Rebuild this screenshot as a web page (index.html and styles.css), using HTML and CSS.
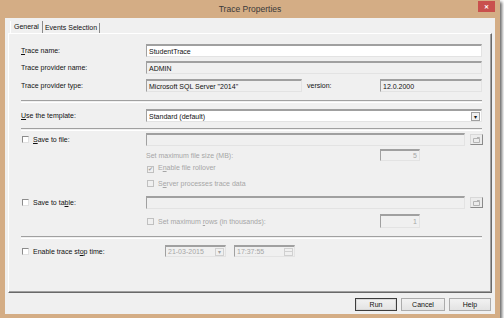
FILE: index.html
```html
<!DOCTYPE html>
<html lang="en">
<head>
    <meta charset="UTF-8">
    <title>Trace Properties</title>
    <link rel="stylesheet" href="styles.css">
</head>
<body>
    <div class="window">
        <div class="titlebar">
            <span class="title">Trace Properties</span>
            <span class="close">&#x2715;</span>
        </div>
        <div class="client">
            <div class="tabs">
                <span class="tab active">General</span>
                <span class="tab">Events Selection</span>
            </div>
            <div class="panel">
                <div class="row r1">
                    <span class="label"><u>T</u>race name:</span>
                    <span class="field white wide">StudentTrace</span>
                </div>
                <div class="row r2">
                    <span class="label">Trace provider name:</span>
                    <span class="field wide">ADMIN</span>
                </div>
                <div class="row r3">
                    <span class="label">Trace provider type:</span>
                    <span class="field type">Microsoft SQL Server "2014"</span>
                    <span class="version">version:</span>
                    <span class="field ver">12.0.2000</span>
                </div>
                <div class="sep s1"></div>
                <div class="row r4">
                    <span class="label"><u>U</u>se the template:</span>
                    <span class="field white wide combo">Standard (default)<span class="arrow">&#9662;</span></span>
                </div>
                <div class="sep s2"></div>
                <div class="row r5">
                    <span class="label"><span class="check"></span><u>S</u>ave to file:</span>
                    <span class="field path"></span>
                    <span class="browse">
                        <svg width="7" height="6" viewBox="0 0 7 6"><path d="M0.5 1.5h6v4h-6z M4 0.5h2.5v1" fill="none" stroke="#b4b4b4"/></svg>
                    </span>
                </div>
                <div class="row r6">
                    <span class="sublabel muted">Set maximum file size (MB):</span>
                    <span class="field num muted">5</span>
                </div>
                <div class="row r7">
                    <span class="option muted"><span class="check checked">&#10004;</span>E<u>n</u>able file rollover</span>
                </div>
                <div class="row r8">
                    <span class="option muted"><span class="check"></span>S<u>e</u>rver processes trace data</span>
                </div>
                <div class="row r9">
                    <span class="label"><span class="check"></span>Save to ta<u>b</u>le:</span>
                    <span class="field path"></span>
                    <span class="browse">
                        <svg width="7" height="6" viewBox="0 0 7 6"><path d="M0.5 1.5h6v4h-6z M4 0.5h2.5v1" fill="none" stroke="#b4b4b4"/></svg>
                    </span>
                </div>
                <div class="row r10">
                    <span class="sublabel muted"><span class="check"></span>Set maximum <u>r</u>ows (in thousands):</span>
                    <span class="field num muted">1</span>
                </div>
                <div class="sep s3"></div>
                <div class="row r11">
                    <span class="label"><span class="check"></span>Enable trace st<u>o</u>p time:</span>
                    <span class="field date muted">21-03-2015<span class="drop">&#9662;</span></span>
                    <span class="field time muted">17:37:55<span class="spin"></span></span>
                </div>
            </div>
            <div class="buttons">
                <span class="btn default">Run</span>
                <span class="btn">Cancel</span>
                <span class="btn">Help</span>
            </div>
        </div>
    </div>
</body>
</html>
```

FILE: styles.css
```css
body {
    margin: 0;
    background: #ffffff;
    font-family: "Liberation Sans", Arial, sans-serif;
    font-size: 7px;
    color: #111111;
}

.window {
    width: 490px;
    height: 314px;
    padding: 0 5px 4px 5px;
    background: #d4ad85;
    box-shadow: 2px 2px 3px rgba(0,0,0,0.6);
    display: flex;
    flex-direction: column;
}

.titlebar {
    height: 18px;
    flex-shrink: 0;
    display: flex;
    align-items: center;
    justify-content: center;
    position: relative;
}

.title {
    font-size: 8.5px;
    color: #3a3a3a;
}

.close {
    position: absolute;
    right: 0;
    top: 1px;
    width: 17px;
    height: 11px;
    background: #c9504d;
    color: #fff;
    font-size: 6px;
    font-weight: bold;
    display: flex;
    align-items: center;
    justify-content: center;
}

.client {
    height: 296px;
    background: #f0f0f0;
    display: flex;
    flex-direction: column;
    padding: 0 3px;
}

.tabs {
    display: flex;
    margin-top: 3px;
    height: 12px;
    padding-left: 2px;
    align-items: flex-end;
    flex-shrink: 0;
}

.tab {
    padding: 0 2px;
    height: 10px;
    line-height: 10px;
    border-right: 1px solid #8a8a8a;
}

.tab.active {
    height: 12px;
    line-height: 11px;
    padding: 0 3px;
    border-left: 1px solid #ffffff;
}

.panel {
    box-sizing: border-box;
    height: 260px;
    flex-shrink: 0;
    border-top: 1px solid #ffffff;
    border-left: 1px solid #ffffff;
    border-right: 1px solid #696969;
    border-bottom: 1px solid #696969;
    box-shadow: inset -1px -1px 0 #a0a0a0;
    padding: 10px 8px 0 12px;
    display: flex;
    flex-direction: column;
}

.row {
    display: flex;
    align-items: center;
    height: 13px;
    flex-shrink: 0;
}

.label {
    width: 125px;
    white-space: nowrap;
}

.field {
    height: 13px;
    box-sizing: border-box;
    border-top: 2px solid #a0a0a0;
    border-left: 1px solid #a0a0a0;
    border-right: 1px solid #e3e3e3;
    border-bottom: 1px solid #e3e3e3;
    background: #f0f0f0;
    padding: 0 2px;
    display: flex;
    align-items: center;
    white-space: nowrap;
}

.field.white {
    background: #ffffff;
}

.wide {
    width: 336px;
}

.type {
    width: 156px;
}

.version {
    margin-left: 5px;
    width: 73px;
}

.ver {
    width: 102px;
}

.combo {
    justify-content: space-between;
    padding-right: 1px;
}

.arrow {
    width: 9px;
    height: 9px;
    border: 1px solid #a0a0a0;
    box-sizing: border-box;
    font-size: 6px;
    display: flex;
    align-items: center;
    justify-content: center;
    background: #f0f0f0;
}

.sep {
    height: 1px;
    width: 461px;
    border-top: 1px solid #a0a0a0;
    border-bottom: 1px solid #ffffff;
    flex-shrink: 0;
}

.check {
    display: inline-block;
    vertical-align: -1px;
    width: 7px;
    height: 7px;
    box-sizing: border-box;
    border: 1px solid #8c8c8c;
    border-right-color: #e0e0e0;
    border-bottom-color: #e0e0e0;
    background: #ffffff;
    margin: 0 4px 0 1px;
    font-size: 6px;
    line-height: 5px;
    text-align: center;
    color: #a0a0a0;
}

.muted {
    color: #a6a6a6;
}

.muted .check {
    background: #f0f0f0;
    border-color: #c0c0c0;
}

.path {
    width: 319px;
}

.browse {
    width: 13px;
    height: 11px;
    margin-left: 5px;
    box-sizing: border-box;
    border: 1px solid #d8d8d8;
    border-right-color: #8a8a8a;
    border-bottom-color: #8a8a8a;
    background: #ececec;
    display: flex;
    align-items: center;
    justify-content: center;
}

.sublabel {
    margin-left: 125px;
    width: 234px;
    white-space: nowrap;
}

.option {
    margin-left: 125px;
    white-space: nowrap;
}

.num {
    width: 40px;
    justify-content: flex-end;
    height: 12px;
}

.r2 { margin-top: 4px; }
.r3 { margin-top: 5px; }
.s1 { margin-top: 8px; }
.r4 { margin-top: 6px; }
.s2 { margin-top: 6px; }
.r5 { margin-top: 2px; }
.r6 { margin-top: 3px; height: 12px; }
.r7 { margin-top: 2px; height: 11px; }
.r8 { margin-top: 4px; height: 11px; }
.r9 { margin-top: 7px; }
.r10 { margin-top: 5px; height: 14px; }
.r10 .num { height: 14px; }
.s3 { margin-top: 8px; }
.r11 { margin-top: 6px; height: 12px; }

.date {
    margin-left: 19px;
    width: 61px;
    height: 12px;
    justify-content: space-between;
    padding-right: 1px;
}

.time {
    margin-left: 8px;
    width: 61px;
    height: 12px;
    justify-content: space-between;
    padding-right: 1px;
}

.drop {
    width: 9px;
    height: 8px;
    font-size: 6px;
    border: 1px solid #d0d0d0;
    box-sizing: border-box;
    display: flex;
    align-items: center;
    justify-content: center;
    color: #a0a0a0;
}

.spin {
    width: 9px;
    height: 8px;
    border: 1px solid #d0d0d0;
    box-sizing: border-box;
    background: linear-gradient(#d0d0d0, #d0d0d0) center / 100% 1px no-repeat;
}

.buttons {
    display: flex;
    justify-content: flex-end;
    gap: 4px;
    margin-top: 5px;
    padding-right: 1px;
}

.btn {
    width: 44px;
    height: 13px;
    box-sizing: border-box;
    border: 1px solid #acacac;
    background: linear-gradient(#f2f2f2, #e3e3e3);
    display: flex;
    align-items: center;
    justify-content: center;
}

.btn.default {
    width: 42px;
    border: 1px solid #3d3d3d;
    box-shadow: inset 0 0 0 1px #d8d8d8;
}

.btn:last-child {
    width: 42px;
}
```
